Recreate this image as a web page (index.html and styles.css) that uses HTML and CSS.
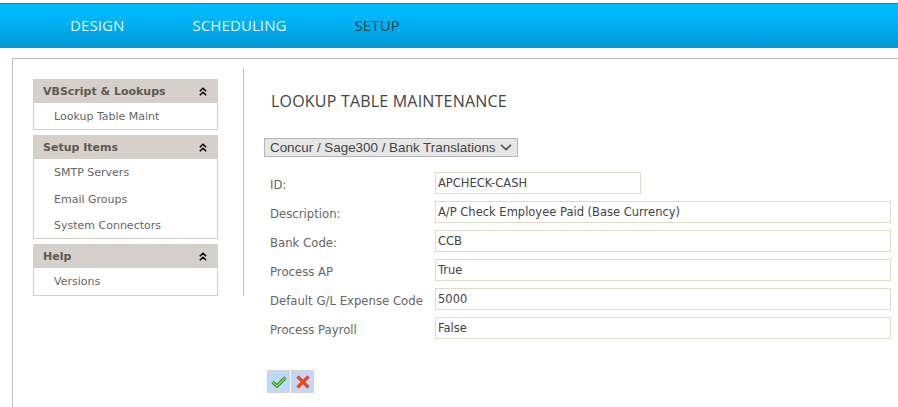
FILE: index.html
```html
<!DOCTYPE html>
<html lang="en">
<head>
<meta charset="utf-8">
<title>Lookup Table Maintenance</title>
<link rel="stylesheet" href="styles.css">
</head>
<body>
<header class="topbar">
  <nav class="nav">
    <a class="nav-item">DESIGN</a>
    <a class="nav-item">SCHEDULING</a>
    <a class="nav-item nav-active">SETUP</a>
  </nav>
</header>
<main class="panel">
  <aside class="sidebar">
    <section class="group">
      <h3 class="group-head">VBScript &amp; Lookups<svg class="chev" viewBox="0 0 8 9"><path d="M.8 4.3 4 1.2 7.2 4.3M.8 8.3 4 5.2 7.2 8.3" fill="none" stroke="#000" stroke-width="1.5"/></svg></h3>
      <ul class="group-list"><li>Lookup Table Maint</li></ul>
    </section>
    <section class="group">
      <h3 class="group-head">Setup Items<svg class="chev" viewBox="0 0 8 9"><path d="M.8 4.3 4 1.2 7.2 4.3M.8 8.3 4 5.2 7.2 8.3" fill="none" stroke="#000" stroke-width="1.5"/></svg></h3>
      <ul class="group-list"><li>SMTP Servers</li><li>Email Groups</li><li>System Connectors</li></ul>
    </section>
    <section class="group">
      <h3 class="group-head">Help<svg class="chev" viewBox="0 0 8 9"><path d="M.8 4.3 4 1.2 7.2 4.3M.8 8.3 4 5.2 7.2 8.3" fill="none" stroke="#000" stroke-width="1.5"/></svg></h3>
      <ul class="group-list"><li>Versions</li></ul>
    </section>
  </aside>
  <section class="content">
    <h1 class="title">LOOKUP TABLE MAINTENANCE</h1>
    <div class="select"><span class="select-text">Concur / Sage300 / Bank Translations</span><svg class="select-arrow" viewBox="0 0 12 7"><path d="M1 .8 6 5.6 11 .8" fill="none" stroke="#555" stroke-width="1.7"/></svg></div>
    <form class="form">
      <div class="row"><label>ID:</label><div class="field field-short">APCHECK-CASH</div></div>
      <div class="row"><label>Description:</label><div class="field">A/P Check Employee Paid (Base Currency)</div></div>
      <div class="row"><label>Bank Code:</label><div class="field">CCB</div></div>
      <div class="row"><label>Process AP</label><div class="field">True</div></div>
      <div class="row"><label>Default G/L Expense Code</label><div class="field">5000</div></div>
      <div class="row"><label>Process Payroll</label><div class="field">False</div></div>
    </form>
    <div class="actions">
      <button class="btn" type="button" aria-label="Save"><svg viewBox="0 0 16 12" width="16" height="12"><path d="M1.5 6 6 10 14.5 1.5" fill="none" stroke="#2a8a1e" stroke-width="3.4"/><path d="M1.5 6 6 10 14.5 1.5" fill="none" stroke="#7fe04a" stroke-width="1.6"/></svg></button>
      <button class="btn" type="button" aria-label="Cancel"><svg viewBox="0 0 14 14" width="14" height="14"><path d="M1.5 1.5 12.5 12.5M12.5 1.5 1.5 12.5" fill="none" stroke="#f0481e" stroke-width="3.4"/></svg></button>
    </div>
  </section>
</main>
</body>
</html>
```

FILE: styles.css
```css
* { box-sizing: border-box; }
html, body { margin: 0; padding: 0; height: 407px; overflow: hidden; background: #fff; }
body { font-family: "DejaVu Sans", Verdana, sans-serif; font-size: 11px; color: #555; }

.topbar {
  margin-top: 3px;
  height: 45px;
  border-top: 1px solid #0a86c0;
  background: linear-gradient(#00bcff 0%, #00b8fb 25%, #0098d8 100%);
}
.nav { display: flex; padding: 12px 0 0 70px; gap: 68px; }
.nav-item { font-family: "Open Sans", "DejaVu Sans", sans-serif; font-size: 15px; letter-spacing: 0.1px; line-height: 18px; color: #e4f2f4; }
.nav-active { color: #35454e; }

.panel {
  display: flex;
  align-items: flex-start;
  margin: 10px 0 0 12px;
  height: 349px;
  border-top: 1px solid #bbb;
  border-left: 1px solid #bbb;
  padding: 10px 0 0 20px;
}
.sidebar {
  width: 211px;
  height: 227px;
  padding-top: 10px;
  border-right: 1px solid #bbb;
  flex: none;
}
.group { width: 185px; margin-bottom: 5px; }
.group-head {
  display: flex;
  justify-content: space-between;
  align-items: center;
  height: 24px;
  margin: 0;
  padding: 0 10px;
  background: #d5d1ca;
  font-size: 11px;
  font-weight: bold;
  color: #5a5a50;
}
.chev { width: 8px; height: 9px; margin-right: 1px; }
.group-list {
  list-style: none;
  margin: 0;
  padding: 0 0 0 20px;
  border: 1px solid #d5d1ca;
  border-top: 0;
}
.group:last-child .group-list { padding-bottom: 1px; }
.group-list li { height: 26px; line-height: 28px; color: #666; }
.group-list li + li { margin-top: 0.5px; }

.content { flex: 1; padding-left: 20px; min-width: 0; }
.title {
  margin: 22px 0 0 7px;
  font-family: "Open Sans", "DejaVu Sans", sans-serif;
  font-size: 16px;
  letter-spacing: 0.2px;
  line-height: 20px;
  font-weight: normal;
  color: #444;
}
.select {
  display: flex;
  align-items: center;
  justify-content: space-between;
  width: 254px;
  height: 19px;
  margin-top: 27px;
  padding: 0 5px 1px 5px;
  border: 1px solid #b5b5b5;
  background: #e6e6e6;
  font-family: "Liberation Sans", Arial, sans-serif;
  font-size: 13.4px;
  color: #444;
}
.select-text { white-space: nowrap; }
.select-arrow { width: 12px; height: 7px; flex: none; }
.form { margin-top: 15px; }
.row { display: flex; align-items: center; height: 22px; margin-bottom: 7px; padding-left: 6px; }
.row label { width: 165px; flex: none; padding-top: 3px; font-size: 11.7px; color: #666; }
.field {
  width: 456px;
  height: 22px;
  padding: 0 2px;
  line-height: 20px;
  border: 1px solid #dcdcc8;
  font-size: 11.5px;
  color: #444;
  background: #fff;
}
.field-short { width: 206px; }
.actions { display: flex; gap: 1px; margin: 31px 0 0 3px; }
.btn {
  display: flex;
  align-items: center;
  justify-content: center;
  width: 23px;
  height: 23px;
  padding: 0;
  border: 1px solid #d3d3d3;
  background: #bfd8fb;
}
```
